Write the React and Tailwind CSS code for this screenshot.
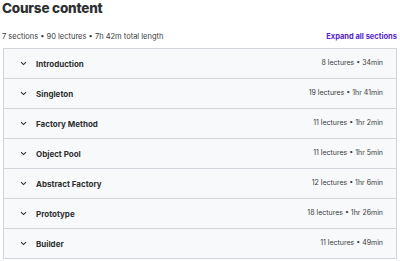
import React from "react";

const sections = [
  ["Introduction", "8 lectures • 34min"],
  ["Singleton", "19 lectures • 1hr 41min"],
  ["Factory Method", "11 lectures • 1hr 2min"],
  ["Object Pool", "11 lectures • 1hr 5min"],
  ["Abstract Factory", "12 lectures • 1hr 6min"],
  ["Prototype", "18 lectures • 1hr 26min"],
  ["Builder", "11 lectures • 49min"],
];

function Chevron() {
  return (
    <svg width="7" height="5" viewBox="0 0 7 5" className="shrink-0">
      <path d="M1 1.2 L3.5 3.6 L6 1.2" fill="none" stroke="#2d2f31" strokeWidth="1.1" />
    </svg>
  );
}

export default function App() {
  return (
    <div className="w-[400px] h-[261px] bg-white overflow-hidden text-[#2d2f31]" style={{ fontFamily: "Inter, 'Noto Sans', sans-serif" }}>
      <div className="pl-[2px] pt-[0px] text-[13.5px] leading-[17px] font-extrabold tracking-[-0.2px]">Course content</div>
      <div className="flex items-end justify-between pl-[2px] pr-[3px] mt-[14px] h-[11px]">
        <span className="text-[7.5px] leading-[10px] text-[#3a3c3e]">7 sections • 90 lectures • 7h 42m total length</span>
        <span className="text-[7.5px] leading-[10px] font-bold text-[#5624d0]">Expand all sections</span>
      </div>
      <div className="mt-[6px] mx-[3px] border border-[#d1d7dc] bg-[#f7f9fa]">
        {sections.map(([t, m], i) => (
          <div key={t} className={`flex items-center pl-[16px] pr-[13px] ${i > 0 ? "h-[30px] border-t border-[#d1d7dc]" : "h-[29px]"}`}>
            <Chevron />
            <span className="ml-[9px] text-[8px] font-bold">{t}</span>
            <span className="ml-auto text-[7px] text-[#3a3c3e]">{m}</span>
          </div>
        ))}
      </div>
    </div>
  );
}
